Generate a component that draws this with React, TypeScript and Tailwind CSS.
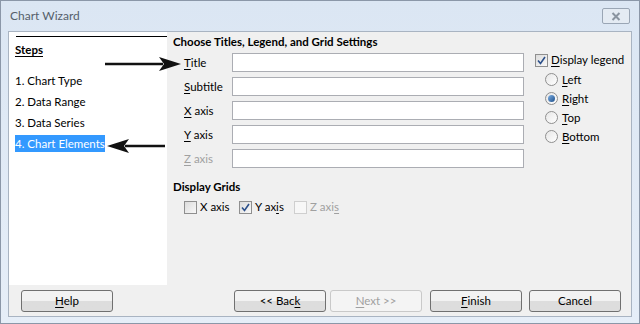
import React from "react";

const U: React.FC<{ c: string; rest: string }> = ({ c, rest }) => (
  <span className="whitespace-nowrap">
    <span className="underline underline-offset-2">{c}</span>
    {rest}
  </span>
);

const Radio: React.FC<{ checked?: boolean }> = ({ checked }) => (
  <span className="w-[13px] h-[13px] shrink-0 rounded-full border border-[#8f8f8f] bg-gradient-to-br from-[#e6e6e6] to-[#ffffff] flex items-center justify-center">
    {checked && <span className="w-[7px] h-[7px] rounded-full bg-gradient-to-br from-[#7fb1e6] to-[#1c4f8a]" />}
  </span>
);

const Check: React.FC<{ checked?: boolean; disabled?: boolean }> = ({ checked, disabled }) => (
  <span
    className={`w-[13px] h-[13px] shrink-0 border flex items-center justify-center ${
      disabled ? "border-[#cfcfcf] bg-[#f7f7f7]" : "border-[#8f8f8f] bg-gradient-to-br from-[#dcdcdc] to-[#f8f8f8]"
    }`}
  >
    {checked && (
      <svg width="9" height="9" viewBox="0 0 9 9">
        <path d="M1 4.5 L3.5 7.5 L8 1" fill="none" stroke="#2b4f8a" strokeWidth="1.6" />
      </svg>
    )}
  </span>
);

const Btn: React.FC<{ children: React.ReactNode; disabled?: boolean; className?: string }> = ({
  children,
  disabled,
  className,
}) => (
  <div
    className={`h-[22px] w-[92px] rounded-[3px] border flex items-center justify-center ${
      disabled
        ? "border-[#c9c9c9] bg-[#f4f4f4] text-[#a0a0a0]"
        : "border-[#707070] bg-gradient-to-b from-[#f2f2f2] from-50% to-[#dddddd] to-50% text-black"
    } ${className ?? ""}`}
  >
    {children}
  </div>
);

const Arrow: React.FC<{ dir: "left" | "right"; className: string; w: number }> = ({ dir, className, w }) => (
  <svg className={`absolute ${className}`} width={w} height="16" viewBox={`0 0 ${w} 16`}>
    {dir === "right" ? (
      <>
        <path d={`M0 8 L${w - 18} 8`} stroke="#111" strokeWidth="2.5" />
        <path d={`M${w - 22} 1 L${w} 8 L${w - 22} 15 L${w - 17} 8 Z`} fill="#111" />
      </>
    ) : (
      <>
        <path d={`M18 8 L${w} 8`} stroke="#111" strokeWidth="2.5" />
        <path d="M0 8 L22 1 L17 8 L22 15 Z" fill="#111" />
      </>
    )}
  </svg>
);

export default function App() {
  const fields = [
    { c: "T", r: "itle" },
    { c: "S", r: "ubtitle" },
    { c: "X", r: " axis" },
    { c: "Y", r: " axis" },
    { c: "Z", r: " axis", disabled: true },
  ];
  return (
    <div
      className="relative w-[640px] h-[324px] bg-gradient-to-b from-[#dbe6f3] to-[#e6eef8] border border-[#8b97a8] flex flex-col overflow-hidden text-[11.5px]"
      style={{ fontFamily: 'Lato, "Noto Sans", sans-serif' }}
    >
      {/* title bar */}
      <div className="h-[30px] flex items-center justify-between pl-[9px] pr-[9px] shrink-0">
        <span className="text-[12px] text-[#555f6b]">Chart Wizard</span>
        <div className="w-[28px] h-[16px] border border-[#9aa6b5] rounded-[2px] bg-[#e4ebf3] flex items-center justify-center">
          <svg width="10" height="9" viewBox="0 0 10 9">
            <path d="M1.5 1 L8.5 8 M8.5 1 L1.5 8" stroke="#8a94a0" strokeWidth="2" />
          </svg>
        </div>
      </div>

      {/* client */}
      <div className="mx-[7px] flex-1 bg-[#f0f0f0] border border-[#a9b4c2] flex flex-col mb-[7px]">
        <div className="flex h-[253px]">
          {/* steps */}
          <div className="w-[158px] bg-white pl-[6px] pt-[4px] shrink-0">
            <div className="h-[1px] bg-black ml-[1px]" />
            <div className="mt-[4px] font-bold underline underline-offset-2">Steps</div>
            <div className="mt-[14px] flex flex-col gap-[3px]">
              <div className="h-[18px] leading-[18px]">1. Chart Type</div>
              <div className="h-[18px] leading-[18px]">2. Data Range</div>
              <div className="h-[18px] leading-[18px]">3. Data Series</div>
              <div className="h-[18px] leading-[18px]">
                <span className="bg-[#3399ff] text-white inline-block h-[17px] leading-[17px]">4. Chart Elements</span>
              </div>
            </div>
          </div>

          {/* main */}
          <div className="flex-1 pl-[6px] pt-[1px]">
            <div className="font-bold h-[17px] leading-[17px] whitespace-nowrap">Choose Titles, Legend, and Grid Settings</div>
            <div className="flex mt-[3px]">
              <div className="flex flex-col gap-[5px] pl-[11px]">
                {fields.map((f) => (
                  <div key={f.c} className="flex items-center h-[19px]">
                    <div className={`w-[48px] ${f.disabled ? "text-[#a0a0a0]" : ""}`}>
                      <U c={f.c} rest={f.r} />
                    </div>
                    <div className="w-[292px] h-[19px] bg-white border border-[#abadb3]" />
                  </div>
                ))}
              </div>
              <div className="ml-[11px] -mt-[2px] flex flex-col">
                <div className="flex items-center gap-[3px] h-[18px]">
                  <Check checked />
                  <U c="D" rest="isplay legend" />
                </div>
                <div className="flex flex-col pl-[10px] mt-[1px]">
                  {[
                    { c: "L", r: "eft" },
                    { c: "R", r: "ight", on: true },
                    { c: "T", r: "op" },
                    { c: "B", r: "ottom" },
                  ].map((o) => (
                    <div key={o.r} className="flex items-center gap-[4px] h-[19px]">
                      <Radio checked={o.on} />
                      <U c={o.c} rest={o.r} />
                    </div>
                  ))}
                </div>
              </div>
            </div>
            <div className="font-bold mt-[10px] h-[17px] leading-[17px]">Display Grids</div>
            <div className="flex items-center mt-[3px] pl-[11px] h-[18px]">
              <div className="flex items-center gap-[3px] w-[55px]">
                <Check />
                <span>X axis</span>
              </div>
              <div className="flex items-center gap-[3px] w-[55px]">
                <Check checked />
                <span>
                  Y ax<span className="underline underline-offset-2">i</span>s
                </span>
              </div>
              <div className="flex items-center gap-[3px] text-[#a0a0a0]">
                <Check disabled />
                <span>
                  Z axi<span className="underline underline-offset-2">s</span>
                </span>
              </div>
            </div>
          </div>
        </div>

        {/* buttons */}
        <div className="flex items-center h-[31px] pl-[12px] pr-[10px]">
          <Btn>
            <U c="H" rest="elp" />
          </Btn>
          <div className="flex-1" />
          <Btn>
            {"<< Bac"}
            <span className="underline underline-offset-2">k</span>
          </Btn>
          <Btn disabled className="ml-[4px]">
            <U c="N" rest="ext >>" />
          </Btn>
          <Btn className="ml-[8px]">
            <U c="F" rest="inish" />
          </Btn>
          <Btn className="ml-[7px]">Cancel</Btn>
        </div>
      </div>

      <Arrow dir="right" className="left-[104px] top-[55px]" w={76} />
      <Arrow dir="left" className="left-[106px] top-[137px]" w={58} />
    </div>
  );
}
